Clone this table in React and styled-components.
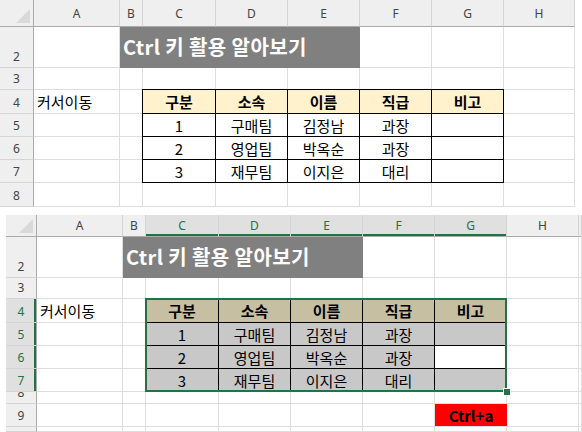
import React from "react";
import styled, { createGlobalStyle, css } from "styled-components";

const GREEN = "#217346";
const GRID = "#dedede";
const HEAD_LINE = "#ababab";
const LETTERS = ["A", "B", "C", "D", "E", "F", "G", "H", ""];

const GlobalStyle = createGlobalStyle`
  html, body { margin: 0; padding: 0; background: #fff; }
  body {
    width: 582px;
    height: 432px;
    overflow: hidden;
    font-family: "Noto Sans CJK KR", "Noto Sans", sans-serif;
  }
`;

const Page = styled.div`
  display: flex;
  flex-direction: column;
  gap: 8px;
`;

const Sheet = styled.div`
  display: grid;
  grid-template-columns: ${({ $cols }) => $cols.map((c) => `${c}px`).join(" ")};
  grid-template-rows: ${({ $rows }) => $rows.map((r) => `${r}px`).join(" ")};
  margin-left: ${({ $indent }) => $indent}px;
  width: max-content;
  overflow: hidden;
`;

const placed = css`
  grid-column: ${({ $col }) => $col};
  grid-row: ${({ $row }) => $row};
  box-sizing: border-box;
  min-width: 0;
  min-height: 0;
`;

const Corner = styled.div`
  ${placed}
  background: #efefef;
  border-right: 1px solid ${HEAD_LINE};
  border-bottom: 1px solid ${HEAD_LINE};
  display: flex;
  align-items: flex-end;
  justify-content: flex-end;
  padding: 0 3px 3px 0;
`;

const ColHeader = styled.div`
  ${placed}
  background: ${({ $sel }) => ($sel ? "#e0e0e0" : "#efefef")};
  color: ${({ $sel }) => ($sel ? GREEN : "#444")};
  border-right: 1px solid #d4d4d4;
  border-bottom: 1px solid ${HEAD_LINE};
  box-shadow: ${({ $sel }) => ($sel ? `inset 0 -2px 0 ${GREEN}` : "none")};
  font-family: "Noto Sans", sans-serif;
  font-size: 12px;
  display: flex;
  align-items: center;
  justify-content: center;
`;

const RowHeader = styled.div`
  ${placed}
  background: ${({ $sel }) => ($sel ? "#e0e0e0" : "#efefef")};
  color: ${({ $sel }) => ($sel ? GREEN : "#444")};
  border-right: 1px solid ${HEAD_LINE};
  border-bottom: 1px solid #d4d4d4;
  box-shadow: ${({ $sel }) => ($sel ? `inset -2px 0 0 ${GREEN}` : "none")};
  font-family: "Noto Sans", sans-serif;
  font-size: 12px;
  line-height: 16px;
  display: flex;
  align-items: flex-end;
  justify-content: center;
  padding-bottom: 2px;
  overflow: hidden;
`;

const Cell = styled.div`
  ${placed}
  border-right: 1px solid ${GRID};
  border-bottom: 1px solid ${GRID};
`;

const Title = styled.div`
  ${placed}
  background: #808080;
  color: #fff;
  font-weight: 700;
  font-size: 20px;
  letter-spacing: 0.4px;
  display: flex;
  align-items: center;
  padding: 0 0 3px 3px;
  white-space: nowrap;
`;

const TextCell = styled(Cell)`
  font-size: 15px;
  color: #000;
  display: flex;
  align-items: center;
  padding-left: 3px;
  white-space: nowrap;
`;

const KeyCell = styled.div`
  ${placed}
  background: #ff0000;
  color: #000;
  font-weight: 700;
  font-size: 15px;
  display: flex;
  align-items: center;
  justify-content: center;
  border-bottom: 1px solid ${GRID};
`;

const Table = styled.div`
  ${placed}
  position: relative;
  margin: -1px 0 0 -1px;
  border-left: 1px solid #000;
  border-top: 1px solid #000;
  display: grid;
  grid-template-columns: 73px 72px 72px 72px 72px;
  grid-template-rows: 24px 23px 23px 23px;
  ${({ $selected }) =>
    $selected &&
    css`
      &::after {
        content: "";
        position: absolute;
        inset: -1px 0 0 -1px;
        border: 2px solid ${GREEN};
        pointer-events: none;
      }
      &::before {
        content: "";
        position: absolute;
        right: -4px;
        bottom: -4px;
        width: 6px;
        height: 6px;
        background: ${GREEN};
        border: 1px solid #fff;
        z-index: 2;
      }
    `}
`;

const TCell = styled.div`
  box-sizing: border-box;
  border-right: 1px solid #000;
  border-bottom: 1px solid #000;
  background: ${({ $bg }) => $bg};
  font-size: 15px;
  font-weight: ${({ $head }) => ($head ? 700 : 400)};
  color: #000;
  display: flex;
  align-items: center;
  justify-content: center;
  white-space: nowrap;
`;

const HEAD = ["구분", "소속", "이름", "직급", "비고"];
const DATA = [
  ["1", "구매팀", "김정남", "과장", ""],
  ["2", "영업팀", "박옥순", "과장", ""],
  ["3", "재무팀", "이지은", "대리", ""],
];

const CornerMark = () => (
  <svg width="14" height="14" viewBox="0 0 14 14">
    <polygon points="14,0 14,14 0,14" fill="#d9d9d9" />
  </svg>
);

const DataTable = ({ selected }) => {
  const headBg = selected ? "#c6bfa2" : "#fff2cc";
  const bodyBg = (r, c) => (!selected ? "#fff" : r === 1 && c === 4 ? "#fff" : "#c8c8c8");
  return (
    <Table $col="4 / 9" $row="4 / 8" $selected={selected}>
      {HEAD.map((h) => (
        <TCell key={h} $head $bg={headBg}>
          {h}
        </TCell>
      ))}
      {DATA.map((row, r) =>
        row.map((v, c) => (
          <TCell key={`${r}-${c}`} $bg={bodyBg(r, c)}>
            {v}
          </TCell>
        ))
      )}
    </Table>
  );
};

const covered = (r, c, selected) =>
  (r === 2 && c >= 3 && c <= 6) ||
  (r >= 4 && r <= 7 && c >= 4 && c <= 8) ||
  (r === 4 && c === 2) ||
  (selected && r === 9 && c === 8);

const SheetView = ({ cols, rows, labels, indent, selected }) => {
  const body = [];
  for (let r = 2; r <= rows.length; r++) {
    for (let c = 2; c <= cols.length; c++) {
      if (!covered(r, c, selected)) body.push(<Cell key={`${r}-${c}`} $col={c} $row={r} />);
    }
  }
  return (
    <Sheet $cols={cols} $rows={rows} $indent={indent}>
      <Corner $col={1} $row={1}>
        <CornerMark />
      </Corner>
      {cols.slice(1).map((_, i) => (
        <ColHeader key={i} $col={i + 2} $row={1} $sel={selected && i >= 2 && i <= 6}>
          {LETTERS[i]}
        </ColHeader>
      ))}
      {labels.map((l, i) => (
        <RowHeader key={i} $col={1} $row={i + 2} $sel={selected && i + 2 >= 4 && i + 2 <= 7}>
          {l}
        </RowHeader>
      ))}
      {body}
      <Title $col="3 / 7" $row={2}>
        Ctrl 키 활용 알아보기
      </Title>
      <TextCell $col={2} $row={4}>
        커서이동
      </TextCell>
      <DataTable selected={selected} />
      {selected && (
        <KeyCell $col={8} $row={9}>
          Ctrl+a
        </KeyCell>
      )}
    </Sheet>
  );
};

export default function App() {
  return (
    <Page>
      <GlobalStyle />
      <SheetView
        cols={[34, 86, 23, 73, 72, 72, 72, 72, 71]}
        rows={[27, 41, 22, 24, 23, 23, 23, 24]}
        labels={["2", "3", "4", "5", "6", "7", "8"]}
        indent={0}
      />
      <SheetView
        cols={[31, 86, 23, 73, 72, 72, 72, 72, 72, 3]}
        rows={[22, 41, 21, 24, 23, 23, 23, 12, 23, 5]}
        labels={["2", "3", "4", "5", "6", "7", "8", "9", ""]}
        indent={6}
        selected
      />
    </Page>
  );
}
